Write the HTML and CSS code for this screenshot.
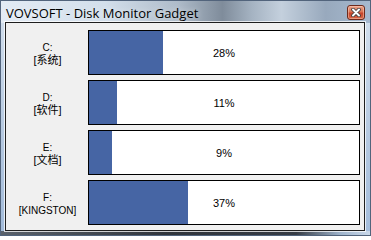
FILE: index.html
```html
<!DOCTYPE html>
<html>
<head>
<meta charset="utf-8">
<link rel="stylesheet" href="styles.css">
</head>
<body>
<div class="window">
  <div class="titlebar">
    <span class="title">VOVSOFT - Disk Monitor Gadget</span>
    <div class="close">
      <svg width="10" height="9" viewBox="0 0 10 9">
        <path d="M2 1.5 L8 7.5 M8 1.5 L2 7.5" stroke="#3a3a3a" stroke-width="3.6" stroke-linecap="round"/>
        <path d="M2 1.5 L8 7.5 M8 1.5 L2 7.5" stroke="#ffffff" stroke-width="2" stroke-linecap="round"/>
      </svg>
    </div>
  </div>
  <div class="client">
    <div class="row">
      <div class="label">C:<br><span class="cjk">[系统]</span></div>
      <div class="bar"><div class="fill" style="width:74px"></div><span class="pct">28%</span></div>
    </div>
    <div class="row">
      <div class="label">D:<br><span class="cjk">[软件]</span></div>
      <div class="bar"><div class="fill" style="width:28px"></div><span class="pct">11%</span></div>
    </div>
    <div class="row">
      <div class="label">E:<br><span class="cjk">[文档]</span></div>
      <div class="bar"><div class="fill" style="width:23px"></div><span class="pct">9%</span></div>
    </div>
    <div class="row">
      <div class="label">F:<br>[KINGSTON]</div>
      <div class="bar"><div class="fill" style="width:99px"></div><span class="pct">37%</span></div>
    </div>
  </div>
</div>
</body>
</html>
```

FILE: styles.css
```css
html, body {
  margin: 0;
  padding: 0;
  background: #ffffff;
}

.window {
  box-sizing: border-box;
  width: 371px;
  height: 236px;
  border: 1px solid #52647c;
  padding: 0 5px 4px 4px;
  display: flex;
  flex-direction: column;
  background:
    linear-gradient(90deg, #5a626c 0%, #30353c 45%, #363c45 80%, #9fb4cc 92%, #c9d8ea 100%) left bottom / 100% 4px no-repeat,
    linear-gradient(90deg, #e3ebf4 0%, #d3dfeb 28%, #aebbc9 48%, #7f8c9b 60%, #a5b3c2 68%, #c4d0dd 76%, #98a9bd 88%, #a6b9cf 100%) left top / 100% 22px no-repeat,
    linear-gradient(180deg, #d5e1ee 0%, #b4c8e0 60%, #a3bcdb 100%);
}

.titlebar {
  height: 21px;
  flex: none;
  display: flex;
  justify-content: space-between;
  align-items: flex-start;
  padding-left: 1px;
}

.title {
  font-family: "Open Sans", "Noto Sans", sans-serif;
  font-size: 13px;
  line-height: 16px;
  color: #000;
  padding-top: 4px;
  text-shadow: 0 0 6px rgba(255, 255, 255, 0.7);
}

.close {
  box-sizing: border-box;
  width: 18px;
  height: 15px;
  margin-top: 4px;
  border: 1px solid #6e2a1c;
  border-radius: 3px;
  background: linear-gradient(180deg, #eba28a 0%, #da7455 45%, #c6432a 55%, #d66848 100%);
  box-shadow: inset 0 0 0 1px rgba(255, 220, 200, 0.45);
  display: flex;
  align-items: center;
  justify-content: center;
}

.client {
  flex: 1;
  border: 1px solid #1e1e1e;
  box-shadow: 0 0 0 1px rgba(255, 255, 255, 0.75);
  background: #f0f0f0;
  padding: 7px 4px 5px 0;
  display: flex;
  flex-direction: column;
  gap: 5px;
}

.row {
  height: 45px;
  display: grid;
  grid-template-columns: 82px 1fr;
}

.label {
  font-family: "Liberation Sans", "Noto Sans CJK SC", sans-serif;
  font-size: 10px;
  line-height: 13px;
  color: #000;
  text-align: center;
  align-self: center;
  padding: 2px 0 0 1px;
}

.cjk {
  font-size: 11px;
}

.bar {
  box-sizing: border-box;
  border: 1px solid #000;
  background: #fff;
  display: grid;
}

.fill {
  grid-area: 1 / 1;
  background: #4665a4;
  justify-self: start;
}

.pct {
  grid-area: 1 / 1;
  place-self: center;
  font-family: "Liberation Sans", sans-serif;
  font-size: 11px;
  color: #000;
}
```
